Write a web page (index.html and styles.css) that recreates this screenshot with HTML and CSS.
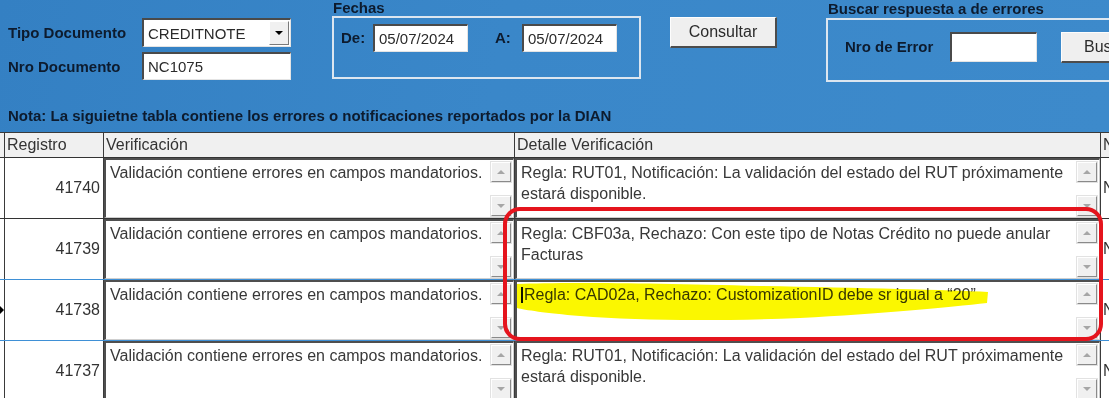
FILE: index.html
```html
<!DOCTYPE html>
<html lang="es">
<head>
<meta charset="utf-8">
<title>Errores DIAN</title>
<link rel="stylesheet" href="styles.css">
</head>
<body>
<div class="app">
  <div class="toolbar">
    <div class="top-row">
      <div class="doc">
        <span class="lbl">Tipo Documento</span>
        <div class="field select"><span class="val">CREDITNOTE</span><span class="drop"><i class="tri-down"></i></span></div>
        <span class="lbl">Nro Documento</span>
        <div class="field"><span class="val">NC1075</span></div>
      </div>
      <div class="group fechas">
        <div class="gtitle">Fechas</div>
        <div class="gbox">
          <span class="lbl de">De:</span>
          <div class="field date"><span class="val">05/07/2024</span></div>
          <span class="lbl a">A:</span>
          <div class="field date"><span class="val">05/07/2024</span></div>
        </div>
      </div>
      <div class="btn consultar">Consultar</div>
      <div class="group buscar">
        <div class="gtitle">Buscar respuesta a de errores</div>
        <div class="gbox">
          <span class="lbl nro-err">Nro de Error</span>
          <div class="field err"></div>
          <div class="btn bus">Buscar</div>
        </div>
      </div>
    </div>
    <div class="nota">Nota: La siguietne tabla contiene los errores o notificaciones reportados por la DIAN</div>
  </div>

  <div class="grid">
    <div class="row head">
      <div class="sel"></div>
      <div class="hc">Registro</div>
      <div class="hc">Verificación</div>
      <div class="hc">Detalle Verificación</div>
      <div class="hc">Nombre</div>
    </div>

    <div class="row">
      <div class="sel"></div>
      <div class="reg">41740</div>
      <div class="cell"><div class="ta"><div class="txt">Validación contiene errores en campos mandatorios.</div><div class="sb"><span class="sbtn"><i class="tri-up"></i></span><span class="sbtn"><i class="tri-dn"></i></span></div></div></div>
      <div class="cell"><div class="ta"><div class="txt">Regla: RUT01, Notificación: La validación del estado del RUT próximamente<br>estará disponible.</div><div class="sb"><span class="sbtn"><i class="tri-up"></i></span><span class="sbtn"><i class="tri-dn"></i></span></div></div></div>
      <div class="ncell">No</div>
    </div>

    <div class="row before-current">
      <div class="sel"></div>
      <div class="reg">41739</div>
      <div class="cell"><div class="ta"><div class="txt">Validación contiene errores en campos mandatorios.</div><div class="sb"><span class="sbtn"><i class="tri-up"></i></span><span class="sbtn"><i class="tri-dn"></i></span></div></div></div>
      <div class="cell"><div class="ta"><div class="txt">Regla: CBF03a, Rechazo: Con este tipo de Notas Crédito no puede anular<br>Facturas</div><div class="sb"><span class="sbtn"><i class="tri-up"></i></span><span class="sbtn"><i class="tri-dn"></i></span></div></div></div>
      <div class="ncell">No</div>
    </div>

    <div class="row current">
      <div class="sel"><i class="row-arrow"></i></div>
      <div class="reg">41738</div>
      <div class="cell"><div class="ta"><div class="txt">Validación contiene errores en campos mandatorios.</div><div class="sb"><span class="sbtn"><i class="tri-up"></i></span><span class="sbtn"><i class="tri-dn"></i></span></div></div></div>
      <div class="cell"><div class="ta"><div class="txt"><span class="caret"></span>Regla: CAD02a, Rechazo: CustomizationID debe sr igual a “20”</div><div class="sb"><span class="sbtn"><i class="tri-up"></i></span><span class="sbtn"><i class="tri-dn"></i></span></div></div></div>
      <div class="ncell">No</div>
    </div>

    <div class="row">
      <div class="sel"></div>
      <div class="reg">41737</div>
      <div class="cell"><div class="ta"><div class="txt">Validación contiene errores en campos mandatorios.</div><div class="sb"><span class="sbtn"><i class="tri-up"></i></span><span class="sbtn"><i class="tri-dn"></i></span></div></div></div>
      <div class="cell"><div class="ta"><div class="txt">Regla: RUT01, Notificación: La validación del estado del RUT próximamente<br>estará disponible.</div><div class="sb"><span class="sbtn"><i class="tri-up"></i></span><span class="sbtn"><i class="tri-dn"></i></span></div></div></div>
      <div class="ncell">No</div>
    </div>
  </div>

  <svg class="mark-hl" width="1109" height="398" viewBox="0 0 1109 398" aria-hidden="true">
    <path d="M517,284 C560,282 650,283 760,286 C860,288 950,290 988,292 L987,303 C950,307 880,314 800,318 C720,321 640,321 580,316 C545,313 525,310 517,308 Z" fill="#fbf700"/>
  </svg>
  <svg class="mark-box" width="1109" height="398" viewBox="0 0 1109 398" aria-hidden="true">
    <rect x="505" y="209" width="596" height="130" rx="15" ry="15" fill="none" stroke="#e5141d" stroke-width="4"/>
  </svg>
</div>
</body>
</html>
```

FILE: styles.css
```css
* { box-sizing: border-box; }
html, body { margin: 0; padding: 0; }
body {
  width: 1109px;
  height: 398px;
  overflow: hidden;
  background: #fff;
  font-family: "Liberation Sans", Arial, sans-serif;
}
.app {
  position: relative;
  width: 1109px;
  height: 398px;
  overflow: hidden;
}

/* ---------- toolbar ---------- */
.toolbar {
  height: 132px;
  background: linear-gradient(100deg, #3480c3 0%, #3a87c9 45%, #3d8acb 100%);
  padding-left: 8px;
  display: flex;
  flex-direction: column;
}
.top-row {
  display: flex;
  align-items: flex-start;
  height: 100px;
  flex-wrap: nowrap;
}
.lbl {
  font-weight: bold;
  font-size: 15px;
  color: #0d1b2e;
  white-space: nowrap;
}
.doc {
  flex: none;
  margin-top: 18px;
  display: grid;
  grid-template-columns: 134px 149px;
  grid-template-rows: 29px 28px;
  row-gap: 5px;
  align-items: center;
}
.field {
  background: #fff;
  border-style: solid;
  border-width: 2px 1px 1px 2px;
  border-color: #4a4a4a #e4e4e4 #e4e4e4 #4a4a4a;
  height: 100%;
  display: flex;
  align-items: center;
  padding-left: 4px;
  font-size: 15px;
  color: #2b2b2b;
  white-space: nowrap;
}
.select { justify-content: space-between; padding-right: 1px; }
.drop {
  width: 20px;
  height: 24px;
  background: #f0f0f0;
  border: 1px solid;
  border-color: #fff #7a7a7a #7a7a7a #fff;
  display: flex;
  align-items: center;
  justify-content: center;
}
.tri-down {
  width: 0; height: 0;
  border-left: 4px solid transparent;
  border-right: 4px solid transparent;
  border-top: 4px solid #000;
}

.group { flex: none; }
.gtitle {
  font-weight: bold;
  font-size: 15px;
  color: #0d1b2e;
  line-height: 16px;
  height: 16px;
  white-space: nowrap;
}
.gbox {
  border: 2px solid #dce6f0;
  display: flex;
  align-items: flex-start;
}
.gbox > * { flex: none; }
.fechas { margin-left: 41px; }
.fechas .gtitle { padding-left: 1px; }
.fechas .gbox { width: 309px; height: 63px; padding: 6px 0 0 7px; }
.de { width: 32px; line-height: 28px; }
.a { width: 27px; margin-left: 27px; line-height: 28px; }
.date { width: 95px; height: 28px; }

.btn {
  flex: none;
  background: #efefef;
  border-style: solid;
  border-width: 1px 2px 2px 1px;
  border-color: #fdfdfd #4c4c4c #4c4c4c #fdfdfd;
  font-size: 16px;
  color: #2b2b2b;
  display: flex;
  align-items: center;
  justify-content: center;
}
.consultar { margin-left: 29px; margin-top: 17px; width: 107px; height: 31px; }

.buscar { margin-left: 49px; }
.buscar .gtitle { height: 18px; line-height: 18px; padding-left: 2px; }
.buscar .gbox { width: 360px; height: 64px; padding: 12px 0 0 17px; }
.nro-err { width: 105px; line-height: 30px; }
.err { width: 87px; height: 30px; }
.bus { margin-left: 24px; width: 100px; height: 31px; justify-content: flex-start; padding-left: 22px; }

.nota {
  margin-top: 7px;
  line-height: 18px;
  font-weight: bold;
  font-size: 15px;
  color: #0d1b2e;
  white-space: nowrap;
}

/* ---------- grid ---------- */
.grid {
  border-top: 1px solid #3a3a3a;
  background: #fff;
}
.row {
  display: grid;
  grid-template-columns: 5px 99px 411px 586px 200px;
  height: 61px;
  border-bottom: 1px solid #333;
}
.row > div { border-right: 1px solid #3a3a3a; }
.row.before-current, .row.current { border-bottom: 1px solid #3f90d6; }
.head {
  height: 25px;
  background: #f0f0f0;
}
.hc {
  font-size: 16px;
  line-height: 24px;
  color: #333;
  padding-left: 2px;
  white-space: nowrap;
  overflow: hidden;
}
.head .sel { background: #f0f0f0; }
.sel {
  display: flex;
  align-items: center;
  background: #fff;
}
.row-arrow {
  width: 0; height: 0;
  border-left: 4px solid #000;
  border-top: 4px solid transparent;
  border-bottom: 4px solid transparent;
}
.reg {
  display: flex;
  align-items: center;
  justify-content: flex-end;
  padding-right: 3px;
  font-size: 16px;
  color: #333;
}
.cell { padding: 0; }
.ta {
  height: 100%;
  display: flex;
  border-style: solid;
  border-width: 2px 1px 1px 2px;
  border-color: #4f4f4f #cfcfcf #cfcfcf #4f4f4f;
  background: #fff;
}
.txt {
  flex: 1;
  min-width: 0;
  padding: 2px 4px;
  font-size: 16px;
  line-height: 21px;
  color: #383838;
  white-space: nowrap;
  overflow: hidden;
}
.caret {
  display: inline-block;
  width: 2px;
  height: 16px;
  background: #111;
  vertical-align: -3px;
  margin-right: 1px;
}
.sb {
  flex: none;
  width: 24px;
  display: flex;
  flex-direction: column;
  justify-content: space-between;
  padding: 2px 2px 1px 2px;
}
.sbtn {
  width: 20px;
  height: 20px;
  background: #f0f0f0;
  border: 1px solid;
  border-color: #fff #8a8a8a #8a8a8a #fff;
  box-shadow: 0 0 0 1px #e2e2e2;
  display: flex;
  align-items: center;
  justify-content: center;
}
.tri-up, .tri-dn {
  width: 0; height: 0;
  border-left: 4px solid transparent;
  border-right: 4px solid transparent;
}
.tri-up { border-bottom: 4px solid #a6a6a6; }
.tri-dn { border-top: 4px solid #a6a6a6; }
.ncell {
  display: flex;
  align-items: center;
  padding-left: 2px;
  font-size: 16px;
  color: #333;
}

/* ---------- annotation overlays ---------- */
.mark-hl, .mark-box {
  position: absolute;
  left: 0;
  top: 0;
  pointer-events: none;
}
.mark-hl { mix-blend-mode: multiply; }
```
